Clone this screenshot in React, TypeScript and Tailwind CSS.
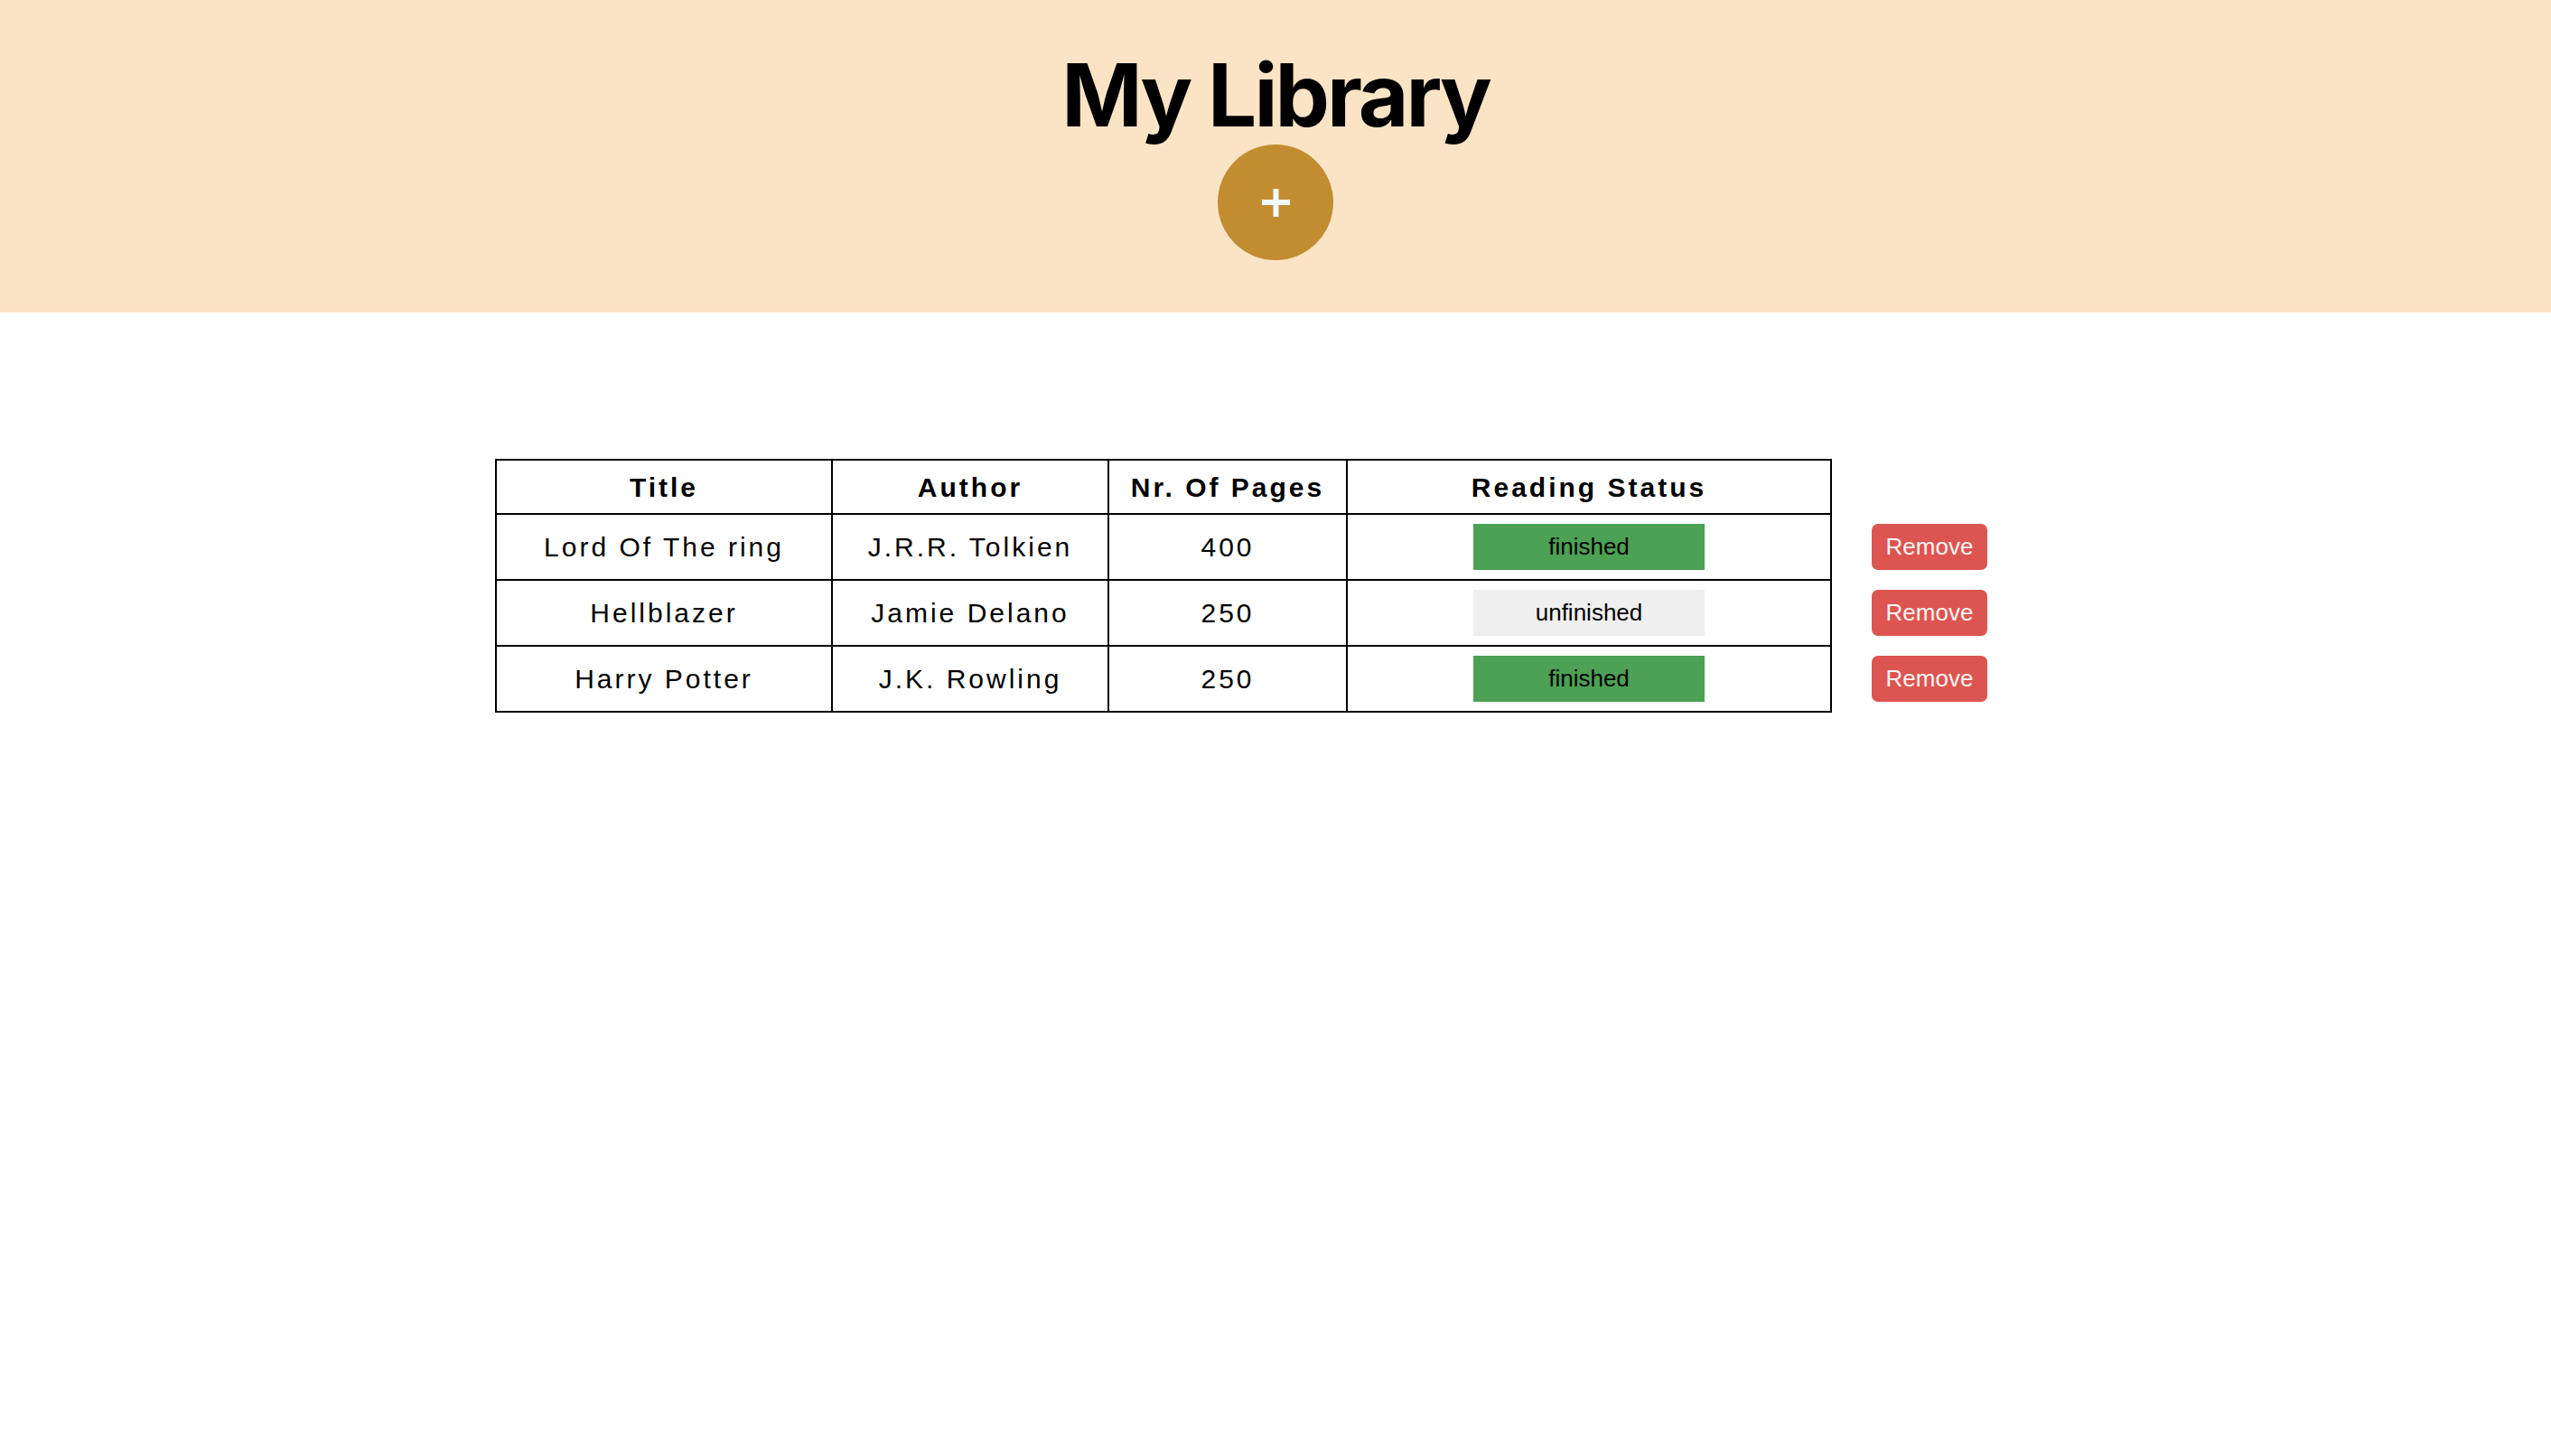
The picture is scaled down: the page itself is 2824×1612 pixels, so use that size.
import React from "react";

type Book = { title: string; author: string; pages: number; read: boolean };

const books: Book[] = [
  { title: "Lord Of The ring", author: "J.R.R. Tolkien", pages: 400, read: true },
  { title: "Hellblazer", author: "Jamie Delano", pages: 250, read: false },
  { title: "Harry Potter", author: "J.K. Rowling", pages: 250, read: true },
];

export default function App() {
  return (
    <div className="min-h-screen bg-white text-black">
      <header className="flex h-[346px] flex-col items-center bg-[#fbe4c6] pt-[57px]">
        <h1 className="font-['Inter',sans-serif] text-[96px] leading-none font-bold tracking-[-3px]">My Library</h1>
        <button
          type="button"
          className="mt-[7px] flex h-32 w-32 items-center justify-center rounded-full bg-[#c28c31]"
        >
          <svg width="31" height="31" viewBox="0 0 31 31">
            <rect x="12.5" y="0" width="6" height="31" fill="#f2f8ff" />
            <rect x="0" y="12" width="31" height="6" fill="#f2f8ff" />
          </svg>
        </button>
      </header>

      <main className="mt-[162px] ml-[548px]">
        <table className="border-collapse font-['Liberation_Sans',Arial,sans-serif] text-[30px] tracking-[3px]">
          <thead>
            <tr>
              <th className="h-[60px] w-[372px] border-2 border-black p-0 font-bold">Title</th>
              <th className="w-[306px] border-2 border-black p-0 font-bold">Author</th>
              <th className="w-[264px] border-2 border-black p-0 font-bold">Nr. Of Pages</th>
              <th className="w-[536px] border-2 border-black p-0 font-bold">Reading Status</th>
            </tr>
          </thead>
          <tbody>
            {books.map((b) => (
              <tr key={b.title}>
                <td className="h-[73px] border-2 border-black p-0 text-center">{b.title}</td>
                <td className="border-2 border-black p-0 text-center">{b.author}</td>
                <td className="border-2 border-black p-0 text-center">{b.pages}</td>
                <td className="border-2 border-black p-0">
                  <div className="flex justify-center">
                    <button
                      type="button"
                      className={`h-[51px] w-[256px] text-[26px] tracking-normal text-black ${
                        b.read ? "bg-[#4ca154]" : "bg-[#efefef]"
                      }`}
                    >
                      {b.read ? "finished" : "unfinished"}
                    </button>
                  </div>
                </td>
                <td className="p-0 pl-[44px]">
                  <button
                    type="button"
                    className="h-[51px] w-[128px] rounded-[7px] bg-[#dd5550] text-[26px] tracking-normal text-[#fff5f5]"
                  >
                    Remove
                  </button>
                </td>
              </tr>
            ))}
          </tbody>
        </table>
      </main>
    </div>
  );
}
